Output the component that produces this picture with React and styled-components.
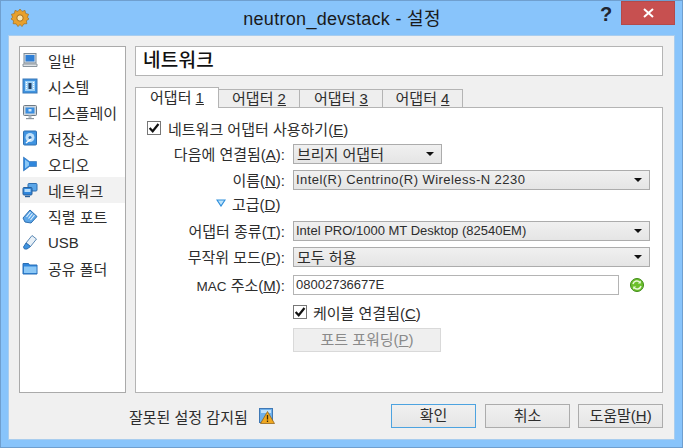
import React from 'react';
import styled, { createGlobalStyle } from 'styled-components';

const FONT = '"Liberation Sans", "Noto Sans CJK KR", sans-serif';

const GlobalStyle = createGlobalStyle`
  html, body {
    margin: 0;
    padding: 0;
    background: #88c4fb;
  }
  body {
    font-family: ${FONT};
    font-size: 15px;
    color: #2d2d2d;
  }
`;

const Window = styled.div`
  width: 683px;
  height: 448px;
  box-sizing: border-box;
  display: flex;
  flex-direction: column;
  background: #88c4fb;
  border: 1px solid #6f9fcf;
  overflow: hidden;
`;

const TitleBar = styled.div`
  height: 34px;
  display: flex;
  align-items: flex-start;
  flex-shrink: 0;
  padding-left: 9px;
  padding-right: 7px;
`;

const AppIcon = styled.svg`
  width: 20px;
  height: 20px;
  margin-top: 7px;
`;

const Title = styled.div`
  flex: 1;
  text-align: center;
  font-size: 18px;
  letter-spacing: 0.3px;
  line-height: 36px;
  color: #1a1a1a;
  padding-left: 54px;
  white-space: nowrap;
`;

const HelpMark = styled.div`
  width: 12px;
  font-weight: bold;
  font-size: 20px;
  line-height: 26px;
  color: #1f2530;
  margin-right: 9px;
`;

const CloseButton = styled.div`
  width: 54px;
  height: 24px;
  background: #c75050;
  border: 1px solid #b34a4a;
  box-sizing: border-box;
  display: flex;
  align-items: center;
  justify-content: center;
`;

const Client = styled.div`
  width: 667px;
  height: 405px;
  margin-left: 7px;
  box-sizing: border-box;
  background: #f0f0f0;
  border: 1px solid #a9cdee;
  padding: 10px 11px 0 10px;
  display: flex;
  flex-direction: column;
`;

const Main = styled.div`
  display: flex;
  gap: 9px;
  height: 347px;
`;

const Sidebar = styled.div`
  width: 107px;
  box-sizing: border-box;
  background: #fff;
  border: 1px solid #aaa;
  display: flex;
  flex-direction: column;
`;

const SideItem = styled.div`
  height: 26px;
  display: flex;
  align-items: center;
  gap: 10px;
  padding-left: 2px;
  box-sizing: border-box;
  background: ${(p) => (p.$active ? '#f2f2f2' : 'transparent')};
  svg {
    width: 16px;
    height: 16px;
    flex-shrink: 0;
  }
`;

const Content = styled.div`
  width: 528px;
  display: flex;
  flex-direction: column;
`;

const Header = styled.div`
  height: 30px;
  box-sizing: border-box;
  background: #fff;
  border: 1px solid #b4b4b4;
  padding-left: 7px;
  font-size: 19px;
  font-weight: 500;
  letter-spacing: 0.3px;
  line-height: 28px;
  color: #111;
  flex-shrink: 0;
`;

const TabRow = styled.div`
  display: flex;
  margin-top: 11px;
  height: 21px;
  align-items: flex-end;
  position: relative;
  z-index: 1;
  flex-shrink: 0;
`;

const Tab = styled.div`
  width: ${(p) => p.$w}px;
  margin-left: ${(p) => (p.$active ? '0' : '-1px')};
  height: ${(p) => (p.$active ? '21px' : '19px')};
  box-sizing: border-box;
  border: 1px solid #b4b4b4;
  border-bottom: ${(p) => (p.$active ? 'none' : '1px solid #b4b4b4')};
  background: ${(p) => (p.$active ? '#fff' : '#eeeeee')};
  text-align: center;
  line-height: ${(p) => (p.$active ? '20px' : '18px')};
`;

const Panel = styled.div`
  flex: 1;
  margin-top: -1px;
  box-sizing: border-box;
  background: #fff;
  border: 1px solid #b4b4b4;
  padding: 11px 12px 0 11px;
  display: flex;
  flex-direction: column;
`;

const CheckRow = styled.div`
  height: 18px;
  display: flex;
  align-items: center;
  gap: ${(p) => p.$gap}px;
  margin-left: ${(p) => p.$indent || 0}px;
  margin-top: ${(p) => p.$top || 0}px;
`;

const Box = styled.div`
  width: 14px;
  height: 14px;
  box-sizing: border-box;
  border: 1px solid #777;
  background: #fff;
  display: flex;
  align-items: center;
  justify-content: center;
  svg {
    width: 12px;
    height: 12px;
  }
`;

const Row = styled.div`
  display: grid;
  grid-template-columns: 138px 1fr;
  column-gap: 8px;
  align-items: center;
  height: 20px;
  margin-top: ${(p) => p.$top}px;
`;

const Label = styled.div`
  text-align: right;
  white-space: nowrap;
`;

const SmallLatin = styled.span`
  font-size: 13.5px;
`;

const Combo = styled.div`
  width: ${(p) => p.$w}px;
  height: 20px;
  box-sizing: border-box;
  border: 1px solid #acacac;
  background: linear-gradient(#f0f0f0, #e5e5e5);
  padding: 0 7px 0 ${(p) => (p.$latin ? '2px' : '3px')};
  display: flex;
  align-items: center;
  justify-content: space-between;
  white-space: nowrap;
  font-size: ${(p) => (p.$latin ? '13px' : '15px')};
  letter-spacing: ${(p) => p.$track || 0}px;
`;

const ComboArrow = styled.span`
  width: 0;
  height: 0;
  border-left: 4px solid transparent;
  border-right: 4px solid transparent;
  border-top: 4px solid #111;
`;

const Advanced = styled.div`
  height: 16px;
  margin-top: 6px;
  margin-left: 69px;
  display: flex;
  align-items: center;
  gap: 6px;
`;

const MacField = styled.div`
  display: flex;
  align-items: center;
  gap: 11px;
`;

const MacInput = styled.div`
  width: 326px;
  height: 20px;
  box-sizing: border-box;
  border: 1px solid #b4b4b4;
  background: #fff;
  padding-left: 2px;
  line-height: 18px;
  font-size: 13px;
`;

const PortButton = styled.div`
  width: 148px;
  height: 24px;
  margin-top: 7px;
  margin-left: 146px;
  box-sizing: border-box;
  background: #efefef;
  border: 1px solid #d9d9d9;
  color: #8a8a8a;
  text-align: center;
  line-height: 22px;
`;

const Footer = styled.div`
  display: flex;
  align-items: center;
  margin-top: 11px;
  height: 24px;
`;

const Warning = styled.div`
  display: flex;
  align-items: center;
  gap: 11px;
  margin-left: 110px;
  flex: 1;
  svg {
    width: 16px;
    height: 16px;
  }
`;

const Button = styled.div`
  width: 85px;
  height: 24px;
  box-sizing: border-box;
  margin-left: ${(p) => p.$gap || 0}px;
  background: linear-gradient(#f0f0f0, #e5e5e5);
  border: 1px solid ${(p) => (p.$primary ? '#4da3e0' : '#acacac')};
  text-align: center;
  line-height: 22px;
`;

const Mnemonic = styled.span`
  text-decoration: underline;
`;

const GeneralIcon = () => (
  <svg viewBox="0 0 16 16">
    <rect x="2" y="1.500" width="12" height="9.500" fill="#d8dfe6" stroke="#7d8a96" />
    <rect x="3.500" y="3" width="9" height="6.500" fill="#2f7fd6" />
    <path d="M1 12h14v2.500H1z" fill="#dfe3e6" stroke="#8a949c" />
  </svg>
);

const SystemIcon = () => (
  <svg viewBox="0 0 16 16">
    <rect x="1" y="1" width="14" height="14" fill="#3f93e0" stroke="#3a78b8" />
    <rect x="3" y="3" width="10" height="10" fill="#9cd0f6" />
    <rect x="6.500" y="5" width="3" height="6" fill="#1e3f66" />
    <path d="M4.500 4v8M11.500 4v8" stroke="#fff" strokeDasharray="1 1" />
  </svg>
);

const DisplayIcon = () => (
  <svg viewBox="0 0 16 16">
    <rect x="1.500" y="1.500" width="13" height="10" rx="1" fill="#cfd6dc" stroke="#6f7a84" />
    <rect x="3.500" y="3.500" width="9" height="6" fill="#3a8ee0" />
    <rect x="6.500" y="5" width="3" height="2.500" fill="#cfe6fa" />
    <path d="M4 14h8v1.200H4z" fill="#8a949c" />
    <path d="M6.500 11.500h3V14h-3z" fill="#b3bcc4" />
  </svg>
);

const StorageIcon = () => (
  <svg viewBox="0 0 16 16">
    <rect x="1.500" y="1" width="13" height="14" rx="1" fill="#3f93e0" stroke="#2f6fb0" />
    <circle cx="8" cy="7.500" r="4.500" fill="#bfe0fa" />
    <circle cx="8" cy="7.500" r="1.500" fill="#2f6fb0" />
    <path d="M4 13l5-4" stroke="#fff" strokeWidth="1.400" />
  </svg>
);

const AudioIcon = () => (
  <svg viewBox="0 0 16 16">
    <path d="M1.500 1l6 4.500h7v5h-7l-6 4.500z" fill="#2f86dc" stroke="#2a6fb5" strokeWidth="0.600" />
    <path d="M3 3.500l4 3v3l-4 3z" fill="#8cc8f6" />
  </svg>
);

const NetworkIcon = () => (
  <svg viewBox="0 0 16 16">
    <rect x="6" y="1.500" width="9" height="7.500" rx="1" fill="#5ba6e8" stroke="#2f6fb0" />
    <rect x="1" y="5.500" width="9" height="7.500" rx="1" fill="#2f86dc" stroke="#2a5f98" />
    <path d="M3 14.500h5" stroke="#2a5f98" strokeWidth="1.400" />
    <rect x="2.500" y="7" width="6" height="3" fill="#b5dcfa" />
  </svg>
);

const SerialIcon = () => (
  <svg viewBox="0 0 16 16">
    <path d="M1 10l7-8 7 6.500-6 6.500-6-1z" fill="#5ba6e8" stroke="#2f6fb0" />
    <path d="M4.500 9l4-5M6.500 10.500l4-5M8.500 12l4-5" stroke="#e6f3fd" strokeWidth="1.100" />
  </svg>
);

const UsbIcon = () => (
  <svg viewBox="0 0 16 16">
    <path d="M10 1.500l4.500 3.500-6 7.500-4.500-3.500z" fill="#e8f0f7" stroke="#5b89b5" />
    <path d="M4 9l4.500 3.500L5 15H2.500L1.500 13z" fill="#3f93e0" stroke="#2f6fb0" />
  </svg>
);

const FolderIcon = () => (
  <svg viewBox="0 0 16 16">
    <path d="M1 3.500h5.500l1 1.500H15v9H1z" fill="#2f86dc" stroke="#2a6fb5" />
    <path d="M2 6.500h12.500V13H2z" fill="#8cc8f6" />
  </svg>
);

const CheckMark = () => (
  <svg viewBox="0 0 11 11">
    <path d="M1.500 5.500l2.800 3L9.600 1.800" fill="none" stroke="#111" strokeWidth="2" />
  </svg>
);

const WarningIcon = () => (
  <svg viewBox="0 0 16 16">
    <rect x="0.500" y="0.500" width="13" height="14" fill="#6fb0ea" stroke="#3f78b5" />
    <rect x="2" y="2" width="10" height="3" fill="#bfe0fa" />
    <path d="M8.500 3.500l7 12H1.500z" fill="#f0a820" stroke="#8a5a10" strokeWidth="0.700" />
    <path d="M8.500 7v4.500M8.500 12.500v1.500" stroke="#3a2a08" strokeWidth="1.300" />
  </svg>
);

const sideItems = [
  { label: '일반', icon: <GeneralIcon /> },
  { label: '시스템', icon: <SystemIcon /> },
  { label: '디스플레이', icon: <DisplayIcon /> },
  { label: '저장소', icon: <StorageIcon /> },
  { label: '오디오', icon: <AudioIcon /> },
  { label: '네트워크', icon: <NetworkIcon />, active: true },
  { label: '직렬 포트', icon: <SerialIcon /> },
  { label: 'USB', icon: <UsbIcon /> },
  { label: '공유 폴더', icon: <FolderIcon /> },
];

function App() {
  return (
    <Window>
      <GlobalStyle />
      <TitleBar>
        <AppIcon viewBox="0 0 20 20">
          <path
            d="M10 1l2 2.400 3-1 .6 3 3 .9-1.200 2.900L19 11l-2.600 1.700.5 3-3.100.2L12 18.600 10 16.500 8 18.600l-1.800-2.700-3.100-.2.500-3L1 11l1.600-1.800L1.400 6.300l3-.9.600-3 3 1z"
            fill="#e8a02c"
            stroke="#9a6414"
            strokeWidth="0.600"
          />
          <circle cx="10" cy="10" r="3.200" fill="#fbe6b0" stroke="#a86e18" />
        </AppIcon>
        <Title>neutron_devstack - 설정</Title>
        <HelpMark>?</HelpMark>
        <CloseButton>
          <svg width="11" height="10" viewBox="0 0 11 10">
            <path d="M1 1l9 8M10 1l-9 8" stroke="#fff" strokeWidth="2" />
          </svg>
        </CloseButton>
      </TitleBar>
      <Client>
        <Main>
          <Sidebar>
            {sideItems.map((item) => (
              <SideItem key={item.label} $active={item.active}>
                {item.icon}
                {item.label}
              </SideItem>
            ))}
          </Sidebar>
          <Content>
            <Header>네트워크</Header>
            <TabRow>
              <Tab $active $w={84}>어댑터 <Mnemonic>1</Mnemonic></Tab>
              <Tab $w={82}>어댑터 <Mnemonic>2</Mnemonic></Tab>
              <Tab $w={84}>어댑터 <Mnemonic>3</Mnemonic></Tab>
              <Tab $w={81}>어댑터 <Mnemonic>4</Mnemonic></Tab>
            </TabRow>
            <Panel>
              <CheckRow $gap={7}>
                <Box><CheckMark /></Box>
                <span>네트워크 어댑터 사용하기(<Mnemonic>E</Mnemonic>)</span>
              </CheckRow>
              <Row $top={6}>
                <Label>다음에 연결됨(<Mnemonic>A</Mnemonic>):</Label>
                <Combo $w={149}>브리지 어댑터<ComboArrow /></Combo>
              </Row>
              <Row $top={6}>
                <Label>이름(<Mnemonic>N</Mnemonic>):</Label>
                <Combo $w={357} $latin $track={0.45}>Intel(R) Centrino(R) Wireless-N 2230<ComboArrow /></Combo>
              </Row>
              <Advanced>
                <svg width="10" height="8" viewBox="0 0 10 8">
                  <path d="M1 1h8L5 7z" fill="#bfe4fa" stroke="#2f8fdc" strokeWidth="1.200" />
                </svg>
                <span>고급(<Mnemonic>D</Mnemonic>)</span>
              </Advanced>
              <Row $top={9}>
                <Label>어댑터 종류(<Mnemonic>T</Mnemonic>):</Label>
                <Combo $w={357} $latin>Intel PRO/1000 MT Desktop (82540EM)<ComboArrow /></Combo>
              </Row>
              <Row $top={6}>
                <Label>무작위 모드(<Mnemonic>P</Mnemonic>):</Label>
                <Combo $w={357}>모두 허용<ComboArrow /></Combo>
              </Row>
              <Row $top={8}>
                <Label><SmallLatin>MAC</SmallLatin> 주소(<Mnemonic>M</Mnemonic>):</Label>
                <MacField>
                  <MacInput>08002736677E</MacInput>
                  <svg width="14" height="14" viewBox="0 0 14 14">
                    <circle cx="7" cy="7" r="6.500" fill="#6cc02c" stroke="#3f8a18" />
                    <path d="M3 6a4 4 0 0 1 7-1.500M11 8a4 4 0 0 1-7 1.500" fill="none" stroke="#e8f8d8" strokeWidth="1.500" />
                    <path d="M10.800 2.500v3h-3zM3.200 11.500v-3h3z" fill="#e8f8d8" />
                  </svg>
                </MacField>
              </Row>
              <CheckRow $gap={6} $indent={146} $top={9}>
                <Box><CheckMark /></Box>
                <span>케이블 연결됨(<Mnemonic>C</Mnemonic>)</span>
              </CheckRow>
              <PortButton>포트 포워딩(<Mnemonic>P</Mnemonic>)</PortButton>
            </Panel>
          </Content>
        </Main>
        <Footer>
          <Warning>
            잘못된 설정 감지됨
            <WarningIcon />
          </Warning>
          <Button $primary>확인</Button>
          <Button $gap={9}>취소</Button>
          <Button $gap={8}>도움말(<Mnemonic>H</Mnemonic>)</Button>
        </Footer>
      </Client>
    </Window>
  );
}

export default App;
